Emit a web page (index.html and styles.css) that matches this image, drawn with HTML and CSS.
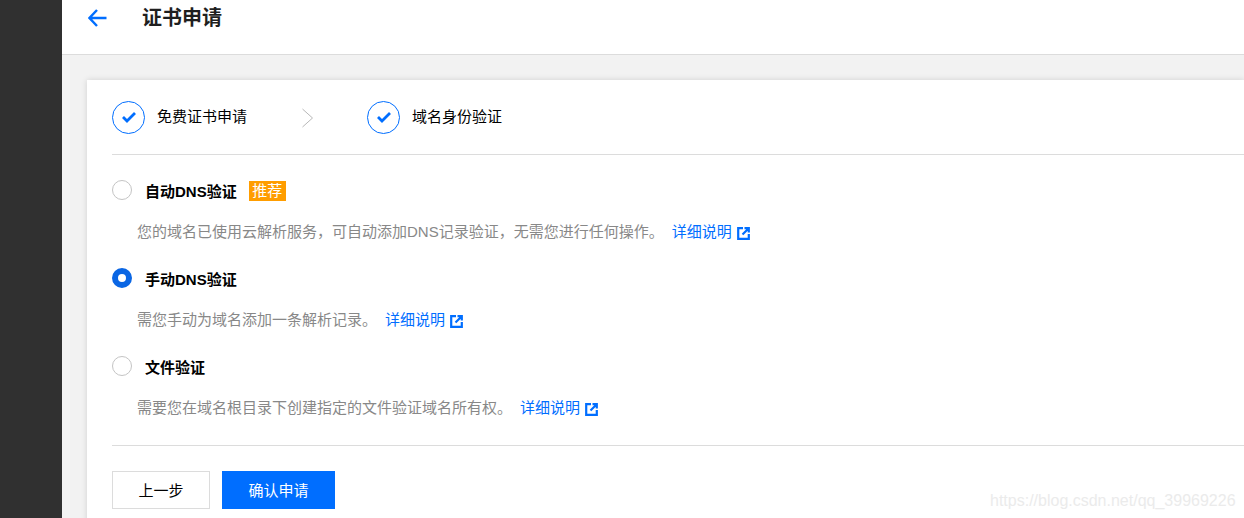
FILE: index.html
```html
<!DOCTYPE html>
<html lang="zh-CN">
<head>
<meta charset="utf-8">
<title>证书申请</title>
<link rel="stylesheet" href="styles.css">
</head>
<body>
<div class="app">
  <aside class="sidebar"></aside>
  <main class="main">
    <header class="topbar">
      <svg class="back" width="19" height="18" viewBox="0 0 19 18"><path d="M9 1 1.500 9 9 17M1.500 9H18.500" fill="none" stroke="#006eff" stroke-width="2.400"/></svg>
      <h1 class="title">证书申请</h1>
    </header>
    <section class="content">
      <div class="card">
        <div class="steps">
          <div class="step">
            <span class="step-circle"><svg width="16" height="12" viewBox="0 0 16 12"><path d="M2 6l4 4 8-8" fill="none" stroke="#006eff" stroke-width="2.800"/></svg></span>
            <span class="step-label">免费证书申请</span>
          </div>
          <svg class="chevron" width="14" height="20" viewBox="0 0 14 20"><path d="M1.500 1 11.500 10 1.500 19" fill="none" stroke="#b8b8b8" stroke-width="1"/></svg>
          <div class="step">
            <span class="step-circle"><svg width="16" height="12" viewBox="0 0 16 12"><path d="M2 6l4 4 8-8" fill="none" stroke="#006eff" stroke-width="2.800"/></svg></span>
            <span class="step-label">域名身份验证</span>
          </div>
        </div>
        <div class="options">
          <div class="option">
            <div class="option-head">
              <span class="radio"></span>
              <span class="option-name">自动DNS验证</span>
              <span class="tag">推荐</span>
            </div>
            <p class="option-desc">您的域名已使用云解析服务，可自动添加DNS记录验证，无需您进行任何操作。<a class="link">详细说明<svg class="ext" width="13" height="13" viewBox="0 0 13 13"><path d="M6 1.200H1.200v10.600h10.600V7M7.500 1.200h4.300v4.300M11.500 1.500 5.500 7.500" fill="none" stroke="#006eff" stroke-width="2.200"/></svg></a></p>
          </div>
          <div class="option">
            <div class="option-head">
              <span class="radio radio-on"></span>
              <span class="option-name">手动DNS验证</span>
            </div>
            <p class="option-desc">需您手动为域名添加一条解析记录。<a class="link">详细说明<svg class="ext" width="13" height="13" viewBox="0 0 13 13"><path d="M6 1.200H1.200v10.600h10.600V7M7.500 1.200h4.300v4.300M11.500 1.500 5.500 7.500" fill="none" stroke="#006eff" stroke-width="2.200"/></svg></a></p>
          </div>
          <div class="option">
            <div class="option-head">
              <span class="radio"></span>
              <span class="option-name">文件验证</span>
            </div>
            <p class="option-desc">需要您在域名根目录下创建指定的文件验证域名所有权。<a class="link">详细说明<svg class="ext" width="13" height="13" viewBox="0 0 13 13"><path d="M6 1.200H1.200v10.600h10.600V7M7.500 1.200h4.300v4.300M11.500 1.500 5.500 7.500" fill="none" stroke="#006eff" stroke-width="2.200"/></svg></a></p>
          </div>
        </div>
        <div class="actions">
          <button class="btn btn-default">上一步</button>
          <button class="btn btn-primary">确认申请</button>
        </div>
      </div>
    </section>
  </main>
</div>
<div class="watermark">https://blog.csdn.net/qq_39969226</div>
</body>
</html>
```
FILE: styles.css
```css
* { box-sizing: border-box; }
html, body { margin: 0; height: 100%; overflow: hidden; }
body {
  font-family: "Liberation Sans", "Noto Sans CJK SC", sans-serif;
  font-size: 15px;
  color: #000;
  background: #f2f2f2;
}
.app { display: flex; height: 518px; overflow: hidden; }
.sidebar { flex: 0 0 62px; background: #303030; }
.main { flex: 1; min-width: 0; display: flex; flex-direction: column; }
.topbar {
  flex: 0 0 55px;
  display: flex;
  align-items: flex-start;
  background: #fff;
  border-bottom: 1px solid #dcdcdc;
  padding-left: 26px;
}
.back { margin-top: 9px; }
.title {
  margin: 3px 0 0 35px;
  font-size: 20px;
  line-height: 30px;
  font-weight: 700;
  color: #1f1f1f;
}
.content { flex: 1; padding: 25px 0 0 25px; }
.card {
  background: #fff;
  height: 460px;
  padding: 0 0 0 25px;
  box-shadow: 0 0 6px rgba(0, 0, 0, 0.14);
}
.steps {
  display: flex;
  align-items: center;
  height: 75px;
  border-bottom: 1px solid #dcdcdc;
}
.step { display: flex; align-items: center; }
.step-circle {
  width: 33px;
  height: 33px;
  border: 1px solid #006eff;
  border-radius: 50%;
  display: flex;
  align-items: center;
  justify-content: center;
}
.step-label { margin-left: 12px; line-height: 22px; }
.chevron { margin: 2px 52px 0 54px; }
.options { padding-top: 24px; height: 291px; border-bottom: 1px solid #dcdcdc; }
.option { height: 88px; }
.option-head { display: flex; align-items: center; height: 22px; }
.radio {
  width: 20px;
  height: 20px;
  border: 1px solid #c4c4c4;
  border-radius: 50%;
  background: #fff;
}
.radio-on { border: 6px solid #0a66e4; }
.option-name { margin-left: 13px; font-weight: 700; font-size: 15px; }
.tag {
  margin: 2px 0 0 12px;
  background: #ff9d00;
  color: #fff;
  font-size: 15px;
  line-height: 20px;
  height: 20px;
  padding: 0 3.500px;
}
.option-desc {
  margin: 20px 0 0 25px;
  line-height: 22px;
  color: #888;
  display: flex;
  align-items: center;
}
.link { color: #006eff; margin-left: 8px; display: inline-flex; align-items: center; }
.ext { margin-left: 5px; margin-top: 3px; }
.actions { display: flex; gap: 12px; padding-top: 25px; }
.btn {
  font: inherit;
  height: 38px;
  padding: 0 0 2px;
  border-radius: 0;
}
.btn-default { width: 98px; background: #fff; border: 1px solid #dcdcdc; color: #000; }
.btn-primary { width: 113px; background: #006eff; border: 0; color: #fff; }
.watermark {
  position: absolute;
  left: 990px;
  top: 490px;
  font-size: 16px;
  line-height: 22px;
  color: #ebebeb;
  white-space: nowrap;
}
```
